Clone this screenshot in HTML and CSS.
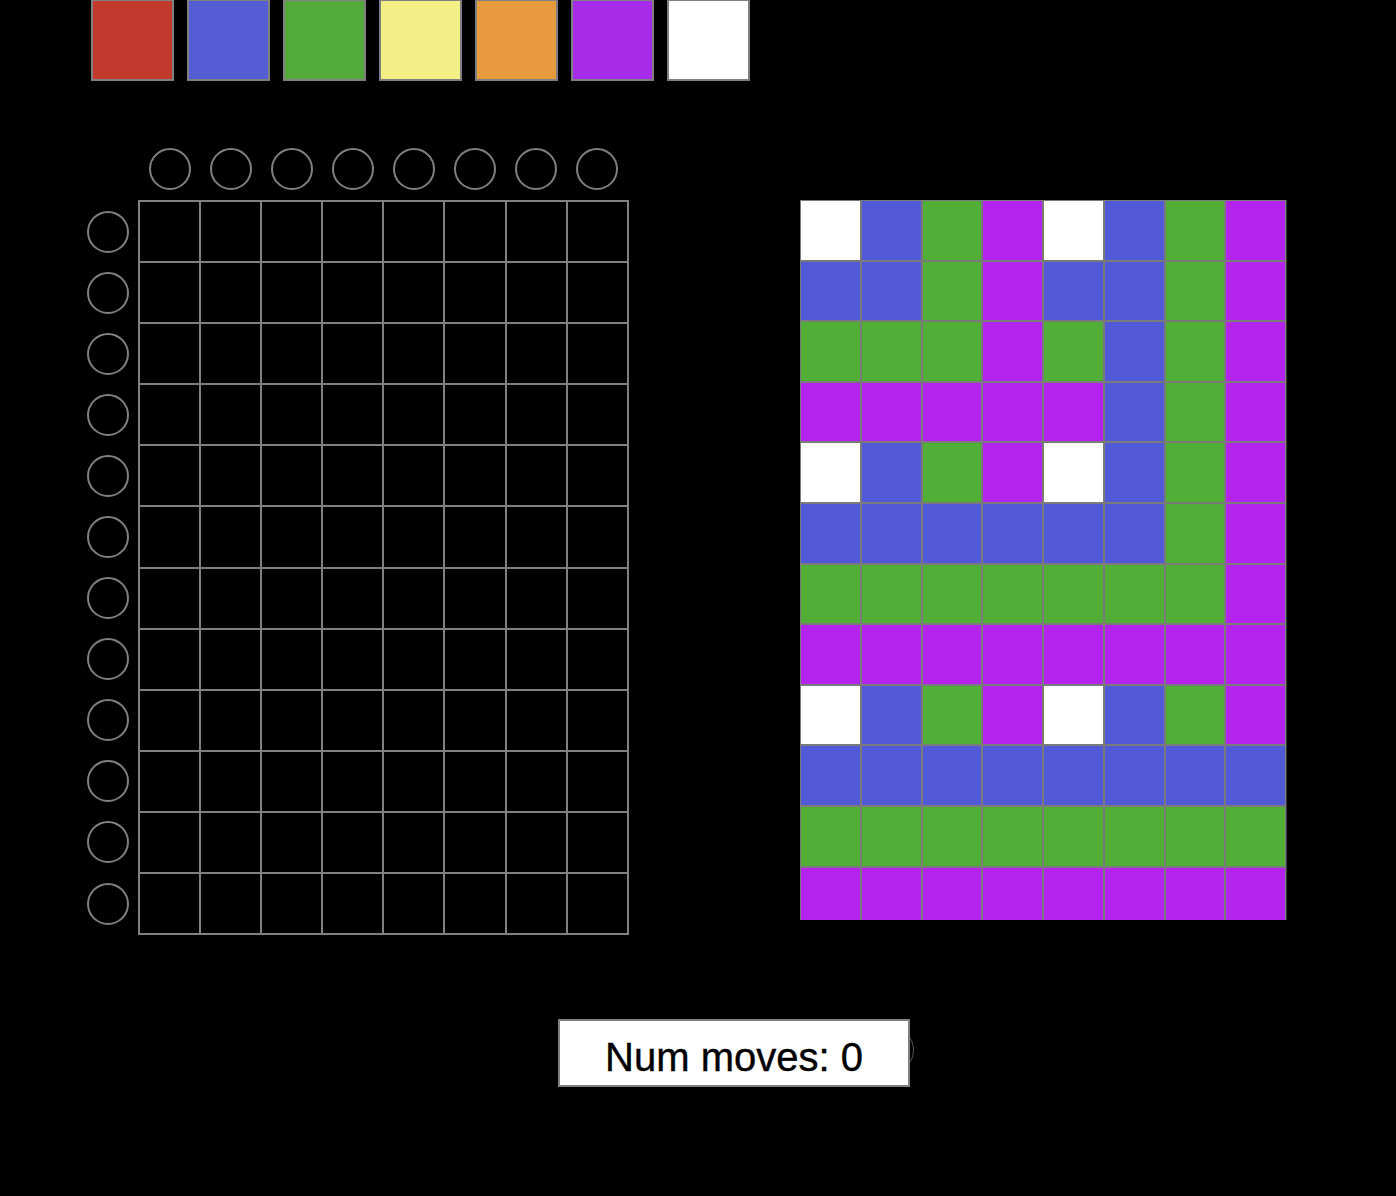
FILE: index.html
```html
<!DOCTYPE html>
<html>

	<head>
		<meta charset="UTF-8">
		<title>color puzzle</title>
		<link rel="stylesheet" href="styles.css">
	</head>

	<body>
		<div class="palette">
			<div class="swatch red"></div>
			<div class="swatch blue"></div>
			<div class="swatch green"></div>
			<div class="swatch yellow"></div>
			<div class="swatch orange"></div>
			<div class="swatch purple"></div>
			<div class="swatch white"></div>
		</div>

		<div class="boards">
			<div class="play">
				<div class="corner"></div>
				<div class="col-marks" id="colMarks"></div>
				<div class="row-marks" id="rowMarks"></div>
				<div class="cells" id="cells"></div>
			</div>
			<div class="target" id="target"></div>
		</div>

		<div class="moves">
			<span class="ghost"></span>
			<div class="counter">Num moves: 0</div>
		</div>

		<script>
			function $(name) {
				return document.getElementById(name);
			}

			//目标图案，每行8格
			var pattern = [
				'WBGPWBGP',
				'BBGPBBGP',
				'GGGPGBGP',
				'PPPPPBGP',
				'WBGPWBGP',
				'BBBBBBGP',
				'GGGGGGGP',
				'PPPPPPPP',
				'WBGPWBGP',
				'BBBBBBBB',
				'GGGGGGGG',
				'PPPPPPPP'
			];
			var names = { W: 'white', B: 'blue', G: 'green', P: 'purple' };

			function addDiv(parent, cls) {
				var div = document.createElement('div');
				div.className = cls;
				parent.appendChild(div);
				return div;
			}

			for (var c = 0; c < 8; c++) {
				addDiv($('colMarks'), 'mark');
			}
			for (var r = 0; r < 12; r++) {
				addDiv($('rowMarks'), 'mark');
				for (var k = 0; k < 8; k++) {
					addDiv($('cells'), 'cell');
				}
			}

			pattern.forEach(function(row) {
				row.split('').forEach(function(ch) {
					addDiv($('target'), 'tile ' + names[ch]);
				});
			});
		</script>
	</body>

</html>
```

FILE: styles.css
```css
* {
	padding: 0;
	margin: 0;
	box-sizing: border-box;
}

body {
	background: #000;
	font-family: "Liberation Sans", Arial, sans-serif;
	width: 1396px;
	height: 1196px;
	overflow: hidden;
}

/* 调色板 */
.palette {
	display: flex;
	gap: 13px;
	padding-left: 91px;
}

.swatch {
	width: 83px;
	height: 81px;
	border: 2px solid #808080;
	border-top-width: 1px;
}

.red { background: #c0392c; }
.blue { background: #545dd3; }
.green { background: #52aa3b; }
.yellow { background: #f4ee87; }
.orange { background: #e89a3f; }
.purple { background: #a72cea; }
.white { background: #fff; }

.boards {
	display: flex;
	align-items: flex-start;
	margin-top: 67px;
	padding-left: 87px;
	gap: 171px;
}

/* 左侧可操作网格 */
.play {
	display: grid;
	grid-template-columns: 42px 491px;
	grid-template-rows: 42px 735px;
	column-gap: 9px;
	row-gap: 10px;
}

.mark {
	width: 42px;
	height: 42px;
	border: 2px solid #808080;
	border-radius: 50%;
}

.col-marks {
	display: grid;
	grid-template-columns: repeat(8, 59.1px);
	column-gap: 2px;
	padding-left: 2px;
	justify-items: center;
}

.row-marks {
	display: grid;
	grid-template-rows: repeat(12, 59.1px);
	row-gap: 2px;
	padding-top: 2px;
	align-items: center;
}

.cells {
	display: grid;
	grid-template-columns: repeat(8, 59.1px);
	grid-template-rows: repeat(12, 59.1px);
	gap: 2px;
	padding: 2px;
	background: #808080;
}

.cell {
	background: #000;
}

/* 右侧目标图案 */
.target {
	margin-top: 52px;
	width: 487px;
	height: 720px;
	overflow: hidden;
	display: grid;
	grid-template-columns: repeat(8, 1fr);
	grid-auto-rows: 58.6px;
	gap: 2px;
	padding: 1px;
	background: #7a7a7a;
	border-right: 1px solid #3a3a3a;
}

.target .blue { background: #5159d6; }
.target .green { background: #51ae37; }
.target .purple { background: #b422ee; }

/* 步数 */
.moves {
	position: relative;
	width: 352px;
	margin: 84px 0 0 558px;
}

.ghost {
	position: absolute;
	left: 310px;
	top: 8px;
	width: 46px;
	height: 46px;
	border: 1px solid #555;
	border-radius: 50%;
}

.counter {
	position: relative;
	height: 68px;
	line-height: 72px;
	border: 2px solid #808080;
	background: #fff;
	color: #000;
	font-size: 40px;
	text-align: center;
	-webkit-text-stroke: 0.4px #000;
}
```
